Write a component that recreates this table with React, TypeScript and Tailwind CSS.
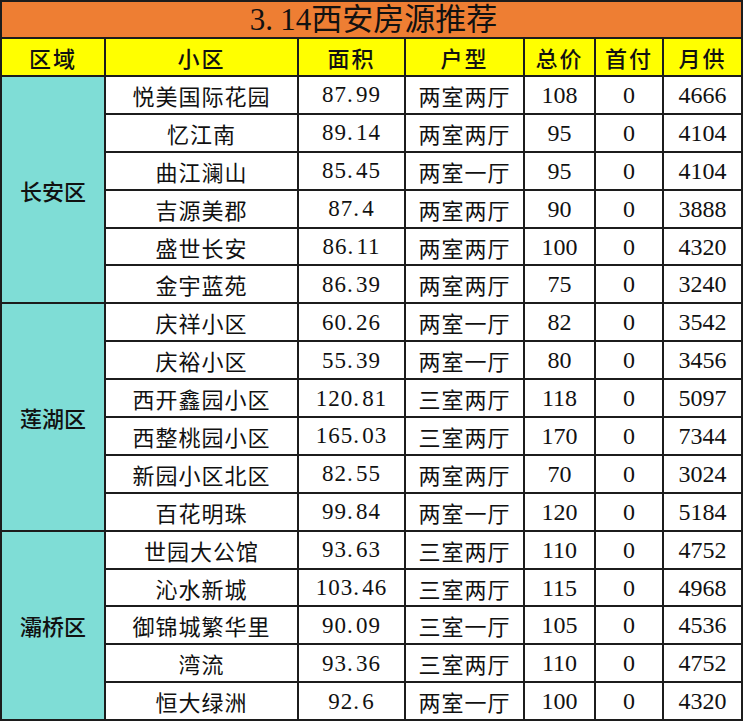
import React from 'react';

type Row = [string, string, string, string, string, string];

const groups: { name: string; rows: Row[] }[] = [
    {
        name: '长安区',
        rows: [
            ['悦美国际花园', '87.99', '两室两厅', '108', '0', '4666'],
            ['忆江南', '89.14', '两室两厅', '95', '0', '4104'],
            ['曲江澜山', '85.45', '两室一厅', '95', '0', '4104'],
            ['吉源美郡', '87.4', '两室两厅', '90', '0', '3888'],
            ['盛世长安', '86.11', '两室两厅', '100', '0', '4320'],
            ['金宇蓝苑', '86.39', '两室两厅', '75', '0', '3240'],
        ],
    },
    {
        name: '莲湖区',
        rows: [
            ['庆祥小区', '60.26', '两室一厅', '82', '0', '3542'],
            ['庆裕小区', '55.39', '两室一厅', '80', '0', '3456'],
            ['西开鑫园小区', '120.81', '三室两厅', '118', '0', '5097'],
            ['西整桃园小区', '165.03', '三室两厅', '170', '0', '7344'],
            ['新园小区北区', '82.55', '两室两厅', '70', '0', '3024'],
            ['百花明珠', '99.84', '两室一厅', '120', '0', '5184'],
        ],
    },
    {
        name: '灞桥区',
        rows: [
            ['世园大公馆', '93.63', '三室两厅', '110', '0', '4752'],
            ['沁水新城', '103.46', '三室两厅', '115', '0', '4968'],
            ['御锦城繁华里', '90.09', '三室一厅', '105', '0', '4536'],
            ['湾流', '93.36', '三室两厅', '110', '0', '4752'],
            ['恒大绿洲', '92.6', '两室一厅', '100', '0', '4320'],
        ],
    },
];

const cjk = "font-['Noto_Sans_CJK_SC',sans-serif]";
const serif = "font-['Liberation_Serif','Noto_Sans_CJK_SC',serif]";
const cell = 'border-2 border-[#1c1c1c] text-center p-0 text-[#111] leading-none';

// SimSun-style number: wide full-cell period
function Num({ v }: { v: string }) {
    const [a, b] = v.split('.');
    return (
        <span className={`${serif} text-[23px] tracking-[1px]`}>
            {a}
            {b !== undefined && (
                <>
                    <span className="inline-block w-[9px] text-left">.</span>
                    {b}
                </>
            )}
        </span>
    );
}

export default function App() {
    const headers = ['区域', '小区', '面积', '户型', '总价', '首付', '月供'];
    return (
        <div className="w-[744px] h-[723px] bg-white">
            <table className="border-collapse table-fixed w-[741px]">
                <colgroup>
                    <col className="w-[104px]" />
                    <col className="w-[193px]" />
                    <col className="w-[107px]" />
                    <col className="w-[119px]" />
                    <col className="w-[71px]" />
                    <col className="w-[68px]" />
                    <col className="w-[79px]" />
                </colgroup>
                <thead>
                    <tr className="h-[37px]">
                        <th colSpan={7} className={`${cell} bg-[#ee7e33] font-normal`}>
                            <span className={`${serif} text-[31px] pl-[4px]`}>
                                3<span className="inline-block w-[15px] text-left">.</span>14西安房源推荐
                            </span>
                        </th>
                    </tr>
                    <tr className="h-[38px]">
                        {headers.map((h) => (
                            <th key={h} className={`${cell} bg-[#ffff00] font-medium ${cjk} text-[22px] tracking-[2px]`}>
                                {h}
                            </th>
                        ))}
                    </tr>
                </thead>
                <tbody>
                    {groups.map((g) =>
                        g.rows.map((r, i) => (
                            <tr key={g.name + i} className="h-[37.9px]">
                                {i === 0 && (
                                    <td rowSpan={g.rows.length} className={`${cell} bg-[#7fddd6] ${cjk} font-medium text-[22px]`}>
                                        {g.name}
                                    </td>
                                )}
                                <td className={`${cell} ${cjk} font-normal text-[22px] tracking-[1px]`}>{r[0]}</td>
                                <td className={cell}>
                                    <Num v={r[1]} />
                                </td>
                                <td className={`${cell} ${cjk} font-normal text-[22px] tracking-[1px]`}>{r[2]}</td>
                                <td className={`${cell} ${serif} text-[24px]`}>{r[3]}</td>
                                <td className={`${cell} ${serif} text-[24px]`}>{r[4]}</td>
                                <td className={`${cell} ${serif} text-[24px]`}>{r[5]}</td>
                            </tr>
                        ))
                    )}
                </tbody>
            </table>
        </div>
    );
}
